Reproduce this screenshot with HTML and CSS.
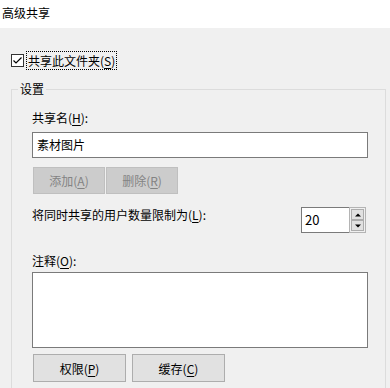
FILE: index.html
```html
<!DOCTYPE html>
<html lang="zh-CN">
<head>
    <meta charset="UTF-8">
    <title>高级共享</title>
    <link rel="stylesheet" href="styles.css">
</head>
<body>
    <div class="titlebar">高级共享</div>
    <div class="dialog">
        <div class="share-row">
            <span class="checkbox">
                <svg width="11" height="11" viewBox="0 0 11 11"><path d="M1.5 5.5 L4 8 L9.5 2.5" fill="none" stroke="#000" stroke-width="1.2"/></svg>
            </span>
            <span class="focus-label">共享此文件夹(<u>S</u>)</span>
        </div>

        <fieldset class="group">
            <legend>设置</legend>

            <div class="label">共享名(<u>H</u>):</div>
            <div class="textbox">素材图片</div>

            <div class="btn-row">
                <button class="btn disabled">添加(<u>A</u>)</button>
                <button class="btn disabled">删除(<u>R</u>)</button>
            </div>

            <div class="limit-row">
                <div class="label">将同时共享的用户数量限制为(<u>L</u>):</div>
                <div class="spin">
                    <div class="spin-value">20</div>
                    <div class="spin-arrows">
                        <span class="arrow up"></span>
                        <span class="arrow down"></span>
                    </div>
                </div>
            </div>

            <div class="label note-label">注释(<u>O</u>):</div>
            <div class="textarea"></div>

            <div class="btn-row bottom">
                <button class="btn wide">权限(<u>P</u>)</button>
                <button class="btn wide">缓存(<u>C</u>)</button>
            </div>
        </fieldset>
    </div>
</body>
</html>
```

FILE: styles.css
```css
* {
    margin: 0;
    padding: 0;
    box-sizing: border-box;
}

body {
    background: #f0f0f0;
    font-family: "Noto Sans CJK SC", "Noto Sans", sans-serif;
    font-size: 12px;
    color: #000;
    overflow: hidden;
}

u {
    text-decoration: underline;
    text-underline-offset: 2px;
}

.titlebar {
    height: 28px;
    background: #fff;
    line-height: 26px;
    padding-left: 2px;
}

.dialog {
    padding: 0 4px 0 11px;
}

/* checkbox line */
.share-row {
    display: flex;
    align-items: center;
    height: 19px;
    margin-top: 23px;
}

.checkbox {
    width: 13px;
    height: 13px;
    border: 1px solid #333;
    background: #fff;
    display: flex;
    align-items: center;
    justify-content: center;
    margin-right: 2px;
}

.focus-label {
    border: 1px dotted #000;
    line-height: 17px;
    padding: 0 1px;
}

/* group box */
.group {
    margin-top: 11px;
    border: 1px solid #dcdcdc;
    border-bottom: none;
    padding: 13px 17px 6px 20px;
}

.group legend {
    margin-left: -14px;
    padding: 0 2px;
    line-height: 16px;
}

.label {
    line-height: 16px;
}

.textbox {
    margin-top: 6px;
    height: 26px;
    border: 1px solid #7a7a7a;
    background: #fff;
    line-height: 24px;
    padding-left: 4px;
}

.btn-row {
    display: flex;
    gap: 1px;
    margin-top: 9px;
    padding-left: 1px;
}

.btn {
    font: inherit;
    height: 27px;
    width: 72px;
    background: #e1e1e1;
    border: 1px solid #adadad;
    color: #000;
}

.btn.disabled {
    background: #cccccc;
    border-color: #bfbfbf;
    color: #838383;
}

.limit-row {
    display: flex;
    justify-content: space-between;
    align-items: flex-start;
    margin-top: 13px;
}

.spin {
    display: flex;
    height: 26px;
    margin-right: 2px;
}

.spin-value {
    width: 48px;
    border: 1px solid #7a7a7a;
    border-right: none;
    background: #fff;
    line-height: 24px;
    padding-left: 3px;
    font-size: 13px;
}

.spin-arrows {
    width: 17px;
    border: 1px solid #b4b4b4;
    background: #f0f0f0;
    display: flex;
    flex-direction: column;
    padding: 1px;
}

.arrow {
    flex: 1;
    background: #e1e1e1;
    border: 1px solid #adadad;
    position: relative;
}

.arrow::after {
    content: '';
    position: absolute;
    left: 50%;
    top: 50%;
    transform: translate(-50%, -50%);
    border-left: 3px solid transparent;
    border-right: 3px solid transparent;
}

.arrow.up::after {
    border-bottom: 3px solid #000;
}

.arrow.down::after {
    border-top: 3px solid #000;
}

.note-label {
    margin-top: 20px;
}

.textarea {
    margin-top: 3px;
    height: 76px;
    border: 1px solid #7a7a7a;
    background: #fff;
}

.btn-row.bottom {
    margin-top: 6px;
    gap: 6px;
}

.btn.wide {
    width: 93px;
    height: 28px;
}
```
